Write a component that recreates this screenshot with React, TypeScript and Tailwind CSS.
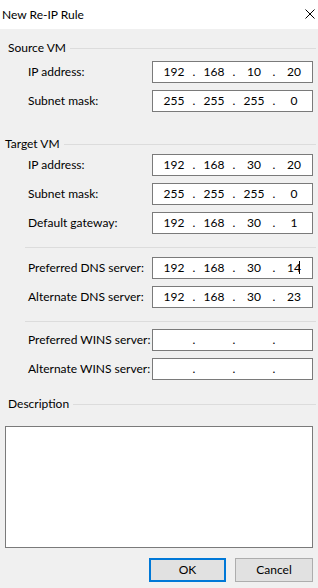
import React from "react";

type IpProps = { parts?: string[]; caret?: boolean };

const IpBox = ({ parts = ["", "", "", ""], caret }: IpProps) => {
  return (
    <div className="flex shrink-0 items-center w-[161px] h-[22px] bg-white border border-[#7a7a7a] pl-[5px]">
      {parts.map((p, i) => (
        <React.Fragment key={i}>
          <div className="relative w-[32px] text-center leading-[16px]">
            {p}
            {caret && i === 3 && (
              <span className="absolute left-[21px] top-[1px] w-px h-[13px] bg-black" />
            )}
          </div>
          {i < 3 && <div className="w-[8px] text-center leading-[16px]">.</div>}
        </React.Fragment>
      ))}
    </div>
  );
};

const Row = ({ label, parts, caret, mt }: { label: string; parts?: string[]; caret?: boolean; mt: string }) => {
  return (
    <div className={`flex items-center pl-[28px] ${mt}`}>
      <div className="w-[124px] shrink-0 whitespace-nowrap leading-[16px]">{label}</div>
      <IpBox parts={parts} caret={caret} />
    </div>
  );
};

const GroupHead = ({ title, x, mt }: { title: string; x: string; mt: string }) => {
  return (
    <div className={`flex items-center pr-[2px] ${x} ${mt}`}>
      <span className="leading-[16px] whitespace-nowrap">{title}</span>
      <div className="flex-1 h-px bg-[#dcdcdc] ml-[4px] mt-[1px]" />
    </div>
  );
};

export default function App() {
  return (
    <div
      className="w-[318px] h-[588px] bg-[#f0f0f0] text-[12px] text-black overflow-hidden"
      style={{ fontFamily: '"Segoe UI", Lato, sans-serif' }}
    >
      <div className="h-[29px] bg-white flex items-center justify-between pl-[2px] pr-[3px]">
        <span className="leading-[16px]">New Re-IP Rule</span>
        <svg width="10" height="10" viewBox="0 0 10 10" className="mt-[-1px]">
          <path d="M0.5 0.5 L9.5 9.5 M9.5 0.5 L0.5 9.5" stroke="#000" strokeWidth="1" fill="none" />
        </svg>
      </div>

      <GroupHead title="Source VM" x="pl-[8px]" mt="mt-[11px]" />
      <Row label="IP address:" parts={["192", "168", "10", "20"]} mt="mt-[5px]" />
      <Row label="Subnet mask:" parts={["255", "255", "255", "0"]} mt="mt-[7px]" />

      <GroupHead title="Target VM" x="pl-[5px]" mt="mt-[24px]" />
      <Row label="IP address:" parts={["192", "168", "30", "20"]} mt="mt-[2px]" />
      <Row label="Subnet mask:" parts={["255", "255", "255", "0"]} mt="mt-[7px]" />
      <Row label="Default gateway:" parts={["192", "168", "30", "1"]} mt="mt-[7px]" />

      <div className="ml-[25px] mr-[2px] h-px bg-[#dcdcdc] mt-[13px]" />
      <Row label="Preferred DNS server:" parts={["192", "168", "30", "14"]} caret mt="mt-[9px]" />
      <Row label="Alternate DNS server:" parts={["192", "168", "30", "23"]} mt="mt-[7px]" />

      <div className="ml-[25px] mr-[2px] h-px bg-[#dcdcdc] mt-[13px]" />
      <Row label="Preferred WINS server:" mt="mt-[7px]" />
      <Row label="Alternate WINS server:" mt="mt-[7px]" />

      <GroupHead title="Description" x="pl-[8px]" mt="mt-[16px]" />
      <div className="ml-[5px] w-[308px] h-[122px] bg-white border border-[#7a7a7a] mt-[14px]" />

      <div className="flex justify-end gap-[9px] pr-[5px] mt-[10px]">
        <button className="w-[77px] h-[24px] bg-[#e1e1e1] border-2 border-[#0078d7] leading-[16px]">OK</button>
        <button className="w-[78px] h-[24px] bg-[#e1e1e1] border border-[#adadad] leading-[16px]">Cancel</button>
      </div>
    </div>
  );
}
